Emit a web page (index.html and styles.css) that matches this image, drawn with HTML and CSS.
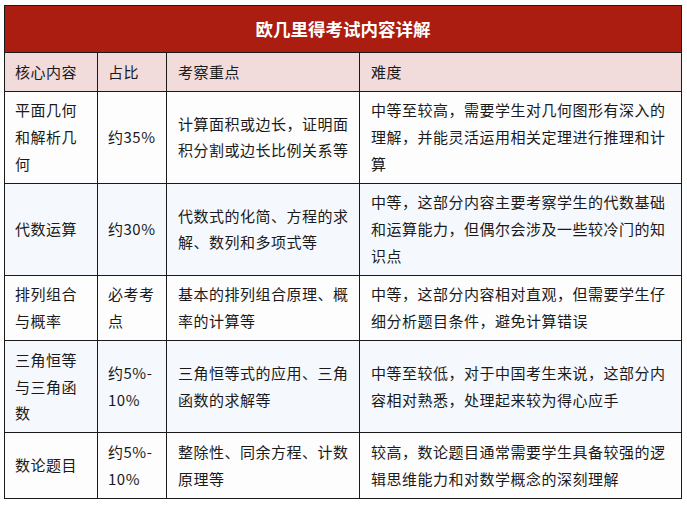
FILE: index.html
```html
<!DOCTYPE html>
<html lang="zh">
<head>
<meta charset="utf-8">
<title>欧几里得考试内容详解</title>
<link rel="stylesheet" href="styles.css">
</head>
<body>
<div class="wrap">
<table class="exam">
  <colgroup>
    <col class="c1"><col class="c2"><col class="c3"><col class="c4">
  </colgroup>
  <thead>
    <tr><th class="title" colspan="4">欧几里得考试内容详解</th></tr>
    <tr class="head">
      <th>核心内容</th><th>占比</th><th>考察重点</th><th>难度</th>
    </tr>
  </thead>
  <tbody>
    <tr class="odd">
      <td>平面几何和解析几何</td>
      <td>约35%</td>
      <td>计算面积或边长，证明面积分割或边长比例关系等</td>
      <td>中等至较高，需要学生对几何图形有深入的理解，并能灵活运用相关定理进行推理和计算</td>
    </tr>
    <tr class="even">
      <td>代数运算</td>
      <td>约30%</td>
      <td>代数式的化简、方程的求解、数列和多项式等</td>
      <td>中等，这部分内容主要考察学生的代数基础和运算能力，但偶尔会涉及一些较冷门的知识点</td>
    </tr>
    <tr class="odd">
      <td>排列组合与概率</td>
      <td>必考考点</td>
      <td>基本的排列组合原理、概率的计算等</td>
      <td>中等，这部分内容相对直观，但需要学生仔细分析题目条件，避免计算错误</td>
    </tr>
    <tr class="even">
      <td>三角恒等与三角函数</td>
      <td>约5%-<br>10%</td>
      <td>三角恒等式的应用、三角函数的求解等</td>
      <td>中等至较低，对于中国考生来说，这部分内容相对熟悉，处理起来较为得心应手</td>
    </tr>
    <tr class="odd">
      <td>数论题目</td>
      <td>约5%-<br>10%</td>
      <td>整除性、同余方程、计数原理等</td>
      <td>较高，数论题目通常需要学生具备较强的逻辑思维能力和对数学概念的深刻理解</td>
    </tr>
  </tbody>
</table>
</div>
</body>
</html>
```

FILE: styles.css
```css
html, body {
  margin: 0;
  padding: 0;
  background: #ffffff;
}
.wrap {
  padding: 5px 7px 0 4px;
}
.exam {
  width: 677px;
  border-collapse: collapse;
  table-layout: fixed;
  font-family: "Noto Sans CJK SC", "Noto Sans", sans-serif;
  font-size: 15px;
  letter-spacing: 0.5px;
  line-height: 26.7px;
  color: #1a1a1a;
}
.c1 { width: 93px; }
.c2 { width: 69px; }
.c3 { width: 193px; }
.c4 { width: 322px; }
.exam th,
.exam td {
  border: 1px solid #1a1a1a;
  padding: 5.5px 8px 5.5px 10px;
  text-align: left;
  vertical-align: middle;
  font-weight: normal;
  word-break: break-all;
}
.exam td:nth-child(3),
.exam td:nth-child(4),
.exam .head th:nth-child(3),
.exam .head th:nth-child(4) {
  padding-left: 11px;
  padding-right: 6px;
}
.exam th.title {
  background: #ab1d10;
  color: #ffffff;
  font-weight: bold;
  font-size: 17.5px;
  letter-spacing: 0;
  text-align: center;
  height: 34px;
  padding: 6px 0;
}
.head th {
  background: #f2dcdb;
}
.odd td {
  background: #fdfdfe;
}
.even td {
  background: #f5f8fd;
}
```
